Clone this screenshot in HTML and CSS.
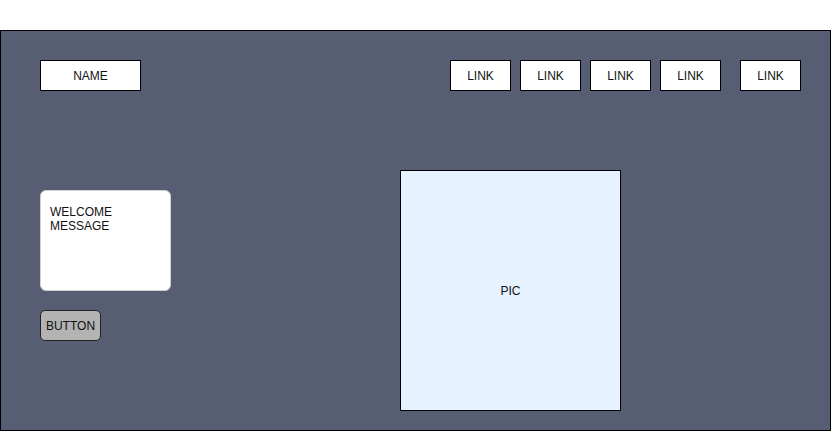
FILE: index.html
```html
<!DOCTYPE html>
<html>
<head>
<meta charset="utf-8">
<link rel="stylesheet" href="styles.css">
</head>
<body>
<div class="frame">
  <header class="header">
    <div class="box name">NAME</div>
    <nav class="links">
      <div class="box link">LINK</div>
      <div class="box link">LINK</div>
      <div class="box link">LINK</div>
      <div class="box link">LINK</div>
      <div class="box link last">LINK</div>
    </nav>
  </header>
  <main class="main">
    <div class="left">
      <div class="welcome">WELCOME<br>MESSAGE</div>
      <div class="button">BUTTON</div>
    </div>
    <div class="pic">PIC</div>
  </main>
</div>
</body>
</html>
```
FILE: styles.css
```css
* { box-sizing: border-box; }
html, body { margin: 0; padding: 0; background: #fff; }
body {
  font-family: "Liberation Sans", Arial, sans-serif;
  font-size: 12px;
  color: #111;
}
.frame {
  margin-top: 30px;
  width: 831px;
  height: 401px;
  border: 1px solid #000;
  background: #575e73;
  display: flex;
  flex-direction: column;
  padding: 29px 29px 0 39px;
}
.header {
  display: flex;
  justify-content: space-between;
  align-items: flex-start;
}
.box {
  height: 31px;
  background: #fff;
  border: 1px solid #000;
  display: flex;
  align-items: center;
  justify-content: center;
}
.name { width: 101px; }
.links { display: flex; gap: 9px; }
.link { width: 61px; }
.link.last { margin-left: 10px; }
.main {
  display: flex;
  align-items: flex-start;
  margin-top: 79px;
}
.left {
  width: 360px;
  padding-top: 20px;
  display: flex;
  flex-direction: column;
  align-items: flex-start;
}
.welcome {
  width: 131px;
  height: 101px;
  background: #fff;
  border: 1px solid #d0d0d0;
  border-radius: 6px;
  padding: 14px 9px;
  line-height: 14px;
}
.button {
  margin-top: 19px;
  width: 61px;
  height: 31px;
  background: #b3b3b3;
  border: 1px solid #222;
  border-radius: 5px;
  display: flex;
  align-items: center;
  justify-content: center;
}
.pic {
  width: 221px;
  height: 241px;
  background: #e6f2ff;
  border: 1px solid #000;
  display: flex;
  align-items: center;
  justify-content: center;
}
```
